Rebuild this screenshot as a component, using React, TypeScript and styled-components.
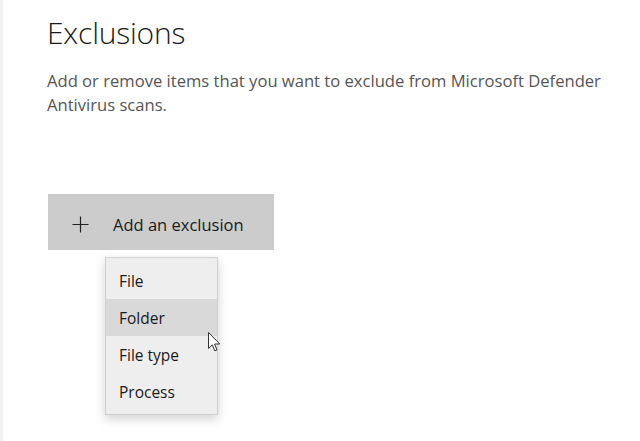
import React from 'react';
import styled, { createGlobalStyle } from 'styled-components';

const GlobalStyle = createGlobalStyle`
  html, body {
    margin: 0;
    padding: 0;
    background: #ffffff;
    font-family: "Open Sans", "Noto Sans", "Liberation Sans", sans-serif;
  }
`;

const Page = styled.div`
  display: flex;
  width: 640px;
  height: 441px;
  overflow: hidden;
  background: #ffffff;
`;

const SideStrip = styled.div`
  width: 3px;
  flex: none;
  background: #f2f2f2;
`;

const Content = styled.main`
  flex: 1;
  padding: 11px 0 0 44px;
  display: flex;
  flex-direction: column;
`;

const Title = styled.h1`
  margin: 0;
  font-size: 30px;
  font-weight: 300;
  line-height: 44px;
  color: #1a1a1a;
  letter-spacing: -0.2px;
`;

const Description = styled.p`
  margin: 14px 0 0;
  width: 575px;
  font-size: 16.6px;
  line-height: 24px;
  color: #555555;
`;

const ButtonWrap = styled.div`
  position: relative;
  margin-top: 77px;
  align-self: flex-start;
`;

const AddButton = styled.button`
  display: flex;
  align-items: center;
  gap: 24px;
  width: 226px;
  height: 56px;
  padding: 4px 0 0 24px;
  margin-left: 1px;
  border: none;
  background: #cccccc;
  font-family: inherit;
  font-size: 16.5px;
  color: #1a1a1a;
  cursor: pointer;
`;

const Menu = styled.ul`
  position: absolute;
  top: 63px;
  left: 58px;
  width: 111px;
  margin: 0;
  padding: 4px 0;
  list-style: none;
  background: #eeeeee;
  border: 1px solid #d0d0d0;
  box-shadow: 0 4px 10px rgba(0, 0, 0, 0.18);
`;

const MenuItem = styled.li<{ $active?: boolean }>`
  height: 37px;
  display: flex;
  align-items: center;
  padding-left: 13px;
  font-size: 15.5px;
  color: #1a1a1a;
  background: ${(p) => (p.$active ? '#d9d9d9' : 'transparent')};
`;

const Cursor = styled.svg`
  position: absolute;
  top: 138px;
  left: 161px;
`;

const PlusIcon = () => (
  <svg width="17" height="17" viewBox="0 0 17 17">
    <path d="M8.5 0.5v16M0.5 8.5h16" stroke="#222" strokeWidth="1.2" fill="none" />
  </svg>
);

export default function App() {
  return (
    <Page>
      <GlobalStyle />
      <SideStrip />
      <Content>
        <Title>Exclusions</Title>
        <Description>
          Add or remove items that you want to exclude from Microsoft Defender Antivirus scans.
        </Description>
        <ButtonWrap>
          <AddButton>
            <PlusIcon />
            Add an exclusion
          </AddButton>
          <Menu>
            <MenuItem>File</MenuItem>
            <MenuItem $active>Folder</MenuItem>
            <MenuItem>File type</MenuItem>
            <MenuItem>Process</MenuItem>
          </Menu>
          <Cursor width="13" height="21" viewBox="0 0 13 21">
            <path
              d="M0.5 0.5 L0.5 16.5 L4.3 12.8 L6.8 18.8 L9 17.9 L6.6 12 L11.8 12 Z"
              fill="#ffffff"
              stroke="#333333"
              strokeWidth="1"
              strokeLinejoin="round"
            />
          </Cursor>
        </ButtonWrap>
      </Content>
    </Page>
  );
}
